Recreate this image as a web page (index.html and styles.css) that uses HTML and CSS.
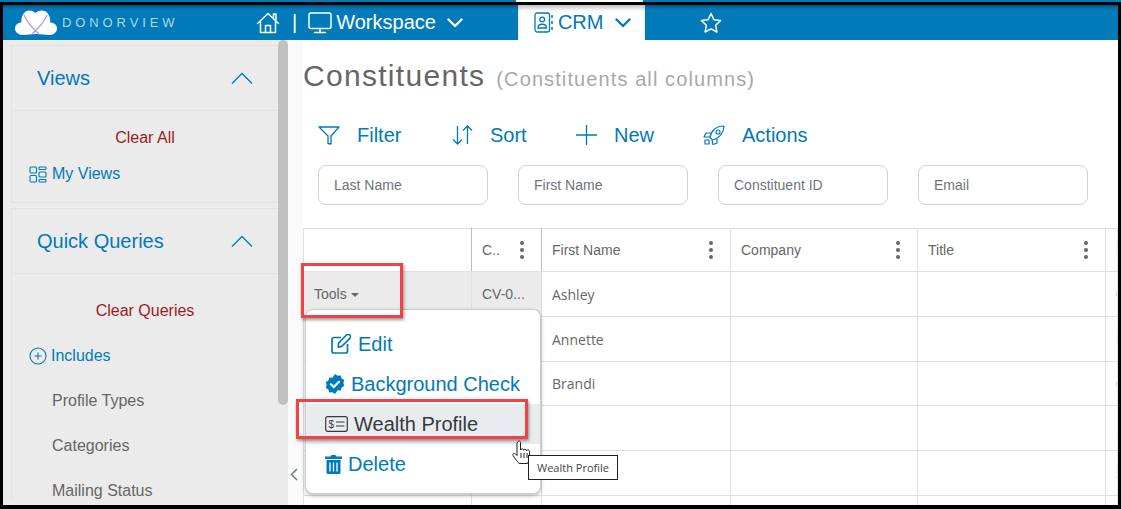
FILE: index.html
```html
<!DOCTYPE html>
<html lang="en">
<head>
	<meta charset="UTF-8">
	<title>Constituents</title>
	<link rel="stylesheet" href="styles.css">
</head>
<body>
<div class="page">
	<div class="top-strip"><div class="strip-tab"></div></div>
	<div class="frame">
		<header class="topbar">
			<div class="logo">
				<svg width="42" height="27" viewBox="0 0 42 27"><path fill="#fff" d="M8 26C3 26 0 23 0 19.500C0 16 3 13.500 6.500 13.500C6 11 6.500 8 8 5.500C10.500 1 16 0 20.500 4C25 0 31 1 33.500 5.500C35 8 35.500 11 35 13.500C39 13.500 42 16 42 19.500C42 23 39 26 35 26C30 26 26 25 21 25C16 25 13 26 8 26Z"/><path fill="none" stroke="#a99dc4" stroke-width="1.200" d="M9 6C12 13 17 19 24 25M32 6C29 13 24 19 17 25"/></svg>
				<span class="logo-text">DONORVIEW</span>
			</div>
			<nav class="topnav">
				<svg class="home-icon" width="24" height="24" viewBox="0 0 24 24" fill="none" stroke="#fff" stroke-width="1.500" stroke-linejoin="round" stroke-linecap="round"><path d="M1.500 12.500 12 2.500l10.500 10M4.500 10.500V21.500h15V10.500M9.500 21.500v-7h5v7M17.500 6V3h2.500v5.500"/></svg>
				<span class="nav-sep">|</span>
				<svg class="screen-icon" width="24" height="24" viewBox="0 0 24 24" fill="none" stroke="#fff" stroke-width="1.500" stroke-linecap="round"><rect x="1" y="2" width="22" height="15.500" rx="2"/><path d="M12 17.500v4M6.500 21.500h11"/></svg>
				<span class="nav-label">Workspace</span>
				<svg class="chev workspace-chev" width="16" height="10" viewBox="0 0 16 10" fill="none" stroke="#fff" stroke-width="2.400" stroke-linecap="round" stroke-linejoin="round"><path d="M1.500 1.500 8 8l6.500-6.500"/></svg>
				<div class="crm-tab">
					<svg width="19" height="21" viewBox="0 0 19 21" fill="none" stroke="#007ab8" stroke-width="1.300"><rect x="1" y="1" width="14.500" height="19" rx="2"/><circle cx="8.200" cy="7.500" r="2.400"/><path d="M4 16c0-5 8.500-5 8.500 0z"/><path stroke-width="1.500" d="M18 3v3M18 9v3M18 15v3"/></svg>
					<span class="crm-label">CRM</span>
					<svg class="chev" width="16" height="10" viewBox="0 0 16 10" fill="none" stroke="#007ab8" stroke-width="2.400" stroke-linecap="round" stroke-linejoin="round"><path d="M1.500 1.500 8 8l6.500-6.500"/></svg>
				</div>
				<svg class="star-icon" width="22" height="21" viewBox="0 0 22 21" fill="none" stroke="#fff" stroke-width="1.500" stroke-linejoin="round"><path d="M11 1.500l2.900 6.300 6.600.8-4.900 4.600 1.300 6.800L11 16.800 5.100 20l1.300-6.800L1.500 8.600l6.600-.8z"/></svg>
			</nav>
		</header>

		<div class="content">
			<aside class="sidebar">
				<section class="panel views-panel">
					<div class="panel-head">
						<span>Views</span>
						<svg width="22" height="12" viewBox="0 0 22 12" fill="none" stroke="#007ab8" stroke-width="1.300"><path d="M1 11.500 11 1.500l10 10"/></svg>
					</div>
					<div class="clear-link clear-all">Clear All</div>
					<div class="my-views">
						<svg width="18" height="17" viewBox="0 0 18 17" fill="none" stroke="#007ab8" stroke-width="1.100"><rect x="1" y="1" width="6.500" height="6" rx="1"/><rect x="10" y="1" width="7" height="2.500" rx=".8"/><rect x="10" y="6" width="7" height="5" rx="1"/><rect x="1" y="9.500" width="6.500" height="6.500" rx="1"/><rect x="10" y="13.500" width="7" height="2.500" rx=".8"/></svg>
						<span>My Views</span>
					</div>
				</section>
				<section class="panel">
					<div class="panel-head">
						<span>Quick Queries</span>
						<svg width="22" height="12" viewBox="0 0 22 12" fill="none" stroke="#007ab8" stroke-width="1.300"><path d="M1 11.500 11 1.500l10 10"/></svg>
					</div>
					<div class="clear-link clear-queries">Clear Queries</div>
					<div class="includes">
						<svg width="18" height="18" viewBox="0 0 18 18" fill="none" stroke="#007ab8" stroke-width="1.100"><circle cx="9" cy="9" r="8"/><path d="M9 5.500v7M5.500 9h7"/></svg>
						<span>Includes</span>
					</div>
					<div class="query-item">Profile Types</div>
					<div class="query-item">Categories</div>
					<div class="query-item">Mailing Status</div>
				</section>
			</aside>
			<div class="scrollbar"><div class="scroll-thumb"></div></div>
			<div class="gutter">
				<svg width="8" height="13" viewBox="0 0 8 13" fill="none" stroke="#6b7c88" stroke-width="1.500"><path d="M7 1 1.500 6.500 7 12"/></svg>
			</div>

			<main class="main">
				<div class="title-row">
					<h1>Constituents</h1>
					<span class="subtitle">(Constituents all columns)</span>
				</div>
				<div class="actions">
					<div class="action action-filter">
						<svg width="22" height="19" viewBox="0 0 22 19" fill="none" stroke="#007ab8" stroke-width="1.300" stroke-linejoin="round"><path d="M1 1h20l-8 9v8l-3-.5V10z"/></svg>
						<span>Filter</span>
					</div>
					<div class="action action-sort">
						<svg width="21" height="20" viewBox="0 0 21 20" fill="none" stroke="#007ab8" stroke-width="1.300"><path d="M5.500 1v18M1 14.500 5.500 19 10 14.500M15.500 19V1M11 5.500 15.500 1 20 5.500"/></svg>
						<span>Sort</span>
					</div>
					<div class="action action-new">
						<svg width="21" height="20" viewBox="0 0 21 20" fill="none" stroke="#007ab8" stroke-width="1.300"><path d="M10.500 0v20M0 10h21"/></svg>
						<span>New</span>
					</div>
					<div class="action action-rocket">
						<svg width="22" height="20" viewBox="0 0 22 20" fill="none" stroke="#007ab8" stroke-width="1.200" stroke-linejoin="round"><path d="M7 12.500 9.500 15C15 14 20.500 9 21 1 13 1 8 6 7 12.500z"/><circle cx="15" cy="7" r="2"/><path d="M8 8H3L1 12h6M14 14v4l-4 1.500-1-4.500M2 15h4v4H2z"/></svg>
						<span>Actions</span>
					</div>
				</div>
				<div class="filters">
					<input class="filter-input" placeholder="Last Name">
					<input class="filter-input" placeholder="First Name">
					<input class="filter-input" placeholder="Constituent ID">
					<input class="filter-input" placeholder="Email">
				</div>
				<table class="grid">
					<colgroup>
						<col class="col-tools"><col class="col-id"><col class="col-first"><col class="col-company"><col class="col-title"><col>
					</colgroup>
					<thead>
						<tr>
							<th class="dark-line"></th>
							<th class="dark-line"><div class="th-inner">C..<span class="dots"><i></i><i></i><i></i></span></div></th>
							<th><div class="th-inner">First Name<span class="dots"><i></i><i></i><i></i></span></div></th>
							<th><div class="th-inner">Company<span class="dots"><i></i><i></i><i></i></span></div></th>
							<th><div class="th-inner">Title<span class="dots"><i></i><i></i><i></i></span></div></th>
							<th class="clip-orange">L</th>
						</tr>
					</thead>
					<tbody>
						<tr class="row-a"><td class="shaded tools-cell">Tools<span class="caret"></span></td><td class="shaded">CV-0...</td><td class="name">Ashley</td><td></td><td></td><td class="clip-blue">C</td></tr>
						<tr class="row-b"><td></td><td></td><td class="name">Annette</td><td></td><td></td><td class="clip-orange">I</td></tr>
						<tr class="row-c"><td></td><td></td><td class="name">Brandi</td><td></td><td></td><td class="clip-blue">C</td></tr>
						<tr class="row-d"><td></td><td></td><td></td><td></td><td></td><td class="clip-blue">1</td></tr>
						<tr class="row-e"><td></td><td></td><td></td><td></td><td></td><td class="clip-blue">2</td></tr>
						<tr class="row-f"><td></td><td></td><td></td><td></td><td></td><td></td></tr>
					</tbody>
				</table>
			</main>
		</div>
	</div>

	<!-- things lying over the page -->
	<div class="tools-menu">
		<div class="menu-item menu-edit">
			<svg width="20" height="20" viewBox="0 0 20 20" fill="none" stroke="#007ab8" stroke-width="1.700" stroke-linejoin="round"><path d="M10 3.500H3a2 2 0 0 0-2 2V17a2 2 0 0 0 2 2h11.500a2 2 0 0 0 2-2v-7"/><path d="M7.500 9 15.500 1a1.800 1.800 0 0 1 3.300 3.300l-8 8-3.500.8z"/></svg>
			<span>Edit</span>
		</div>
		<div class="menu-item menu-check">
			<svg width="20" height="20" viewBox="0 0 20 20"><path fill="#007ab8" d="M10 0l2.600 1.700 3-.2 1 2.900 2.600 1.600-.8 3 .8 3-2.600 1.600-1 2.900-3-.2L10 20l-2.600-1.700-3 .2-1-2.900L.8 14l.8-3-.8-3 2.600-1.600 1-2.900 3 .2z"/><path fill="none" stroke="#fff" stroke-width="2.200" stroke-linecap="round" stroke-linejoin="round" d="M6 10.300l2.800 2.700L14 7.800"/></svg>
			<span>Background Check</span>
		</div>
		<div class="menu-item menu-wealth">
			<svg width="23" height="16" viewBox="0 0 23 16" fill="none" stroke="#343a40" stroke-width="1.200"><rect x=".7" y=".7" width="21.600" height="14.600" rx="2"/><text x="3.500" y="12" font-size="10" fill="#343a40" stroke="none" font-family="Liberation Sans">$</text><path d="M11 6h8.500M11 10h8.500"/></svg>
			<span>Wealth Profile</span>
		</div>
		<div class="menu-item menu-delete">
			<svg width="17" height="20" viewBox="0 0 17 20"><path fill="#007ab8" d="M0 2.500h5.500L6.500 1h4l1 1.500H17V5H0zM1.500 6h14v12.500a1.500 1.500 0 0 1-1.500 1.500H3a1.500 1.500 0 0 1-1.500-1.500z"/><path stroke="#fff" stroke-width="1.300" d="M5 8.500v9M8.500 8.500v9M12 8.500v9"/></svg>
			<span>Delete</span>
		</div>
	</div>
	<div class="red-box box-tools"></div>
	<div class="red-box box-wealth"></div>
	<svg class="hand-cursor" width="20" height="26" viewBox="0 0 20 26"><path fill="#fff" stroke="#222" stroke-width="1" stroke-linejoin="round" d="M6 1.500c1-1 2.500-.5 2.500 1V10c.5-1.500 3-1.500 3 0 .5-1 3-1 3 .5.500-1 3-.8 3 1V17c0 3-1 4-2 6.500H7C5.500 21 3 19 1 15.500c-.7-1.500 1-3 2.500-1.500L5 15.500V3z"/><path stroke="#222" d="M9 13v5M12 13v5M15 13v5"/></svg>
	<div class="tip">Wealth Profile</div>
</div>
</body>
</html>
```

FILE: styles.css
```css
* {
	box-sizing: border-box;
}
body {
	margin: 0;
	font-family: "Liberation Sans", Arial, sans-serif;
	background-color: #fff;
	overflow: hidden;
}
.page {
	position: relative;
	width: 1121px;
	height: 509px;
	overflow: hidden;
}
.top-strip {
	height: 2px;
	background-color: #007ab8;
	padding-left: 516px;
}
.strip-tab {
	width: 127px;
	height: 2px;
	background-color: #fff;
}
.frame {
	height: 507px;
	border: 3px solid #000;
	border-bottom-width: 4px;
	overflow: hidden;
	display: flex;
	flex-direction: column;
}

/* top bar */
.topbar {
	height: 35px;
	flex: none;
	display: flex;
	background-color: #007ab8;
	box-shadow: inset 0 3px 3px -1px rgba(0, 0, 0, .3);
}
.logo {
	width: 253px;
	display: flex;
	align-items: center;
	padding-left: 12px;
	gap: 5px;
}
.logo-text {
	font-size: 13px;
	letter-spacing: 3.9px;
	color: #b5d6e8;
}
.topnav {
	display: flex;
	align-items: center;
	flex: 1;
}
.nav-sep {
	color: #fff;
	font-size: 20px;
	margin: 0 11px 0 12px;
}
.nav-label {
	color: #fff;
	font-size: 20px;
	margin-left: 4px;
}
.workspace-chev {
	margin-left: 11px;
}
.crm-tab {
	width: 127px;
	height: 35px;
	margin-left: 55px;
	padding-left: 16px;
	display: flex;
	align-items: center;
	background-color: #fff;
	box-shadow: inset 0 4px 4px -1px rgba(0, 0, 0, .25);
}
.crm-label {
	color: #007ab8;
	font-size: 20px;
	margin: 0 12px 0 5px;
}
.star-icon {
	margin-left: 55px;
}

.content {
	flex: 1;
	min-height: 0;
	display: flex;
}

/* left side */
.sidebar {
	width: 275px;
	flex: none;
	padding: 5px 0 0 8px;
	background-color: #ebebeb;
	overflow: hidden;
}
.panel {
	border-top: 1px solid #e3e3e6;
	border-left: 1px solid #e3e3e6;
}
.views-panel {
	height: 158px;
	border-bottom: 1px solid #dfe2e8;
	margin-bottom: 5px;
}
.panel-head {
	height: 65px;
	padding: 0 25px 0 25px;
	display: flex;
	justify-content: space-between;
	align-items: center;
	font-size: 20px;
	color: #007ab8;
	border-bottom: 1px solid #dfe2e8;
}
.clear-link {
	text-align: center;
	font-size: 16px;
	color: #9c1b1f;
}
.clear-all {
	padding-top: 18px;
}
.clear-queries {
	padding-top: 28px;
}
.my-views {
	display: flex;
	align-items: center;
	gap: 5px;
	margin: 18px 0 0 17px;
	font-size: 16px;
	color: #007ab8;
}
.includes {
	display: flex;
	align-items: center;
	gap: 4px;
	margin: 27px 0 0 17px;
	font-size: 16px;
	color: #007ab8;
}
.query-item {
	margin: 27px 0 0 40px;
	font-size: 16px;
	line-height: 18px;
	color: #666;
}
.scrollbar {
	width: 10px;
	flex: none;
	background-color: #ebebeb;
}
.scroll-thumb {
	width: 10px;
	height: 365px;
	background-color: #c1c1c1;
	border-radius: 5px;
}
.gutter {
	width: 15px;
	flex: none;
	background-color: #fafafa;
	padding: 427px 0 0 2px;
}

/* main part */
.main {
	flex: 1;
	min-width: 0;
	background-color: #fff;
}
.title-row {
	display: flex;
	align-items: baseline;
	height: 70px;
	padding-top: 19px;
	gap: 11px;
}
h1 {
	margin: 0;
	font-size: 30px;
	font-weight: 400;
	letter-spacing: 1.300px;
	color: #666;
}
.subtitle {
	font-size: 20px;
	letter-spacing: 1.100px;
	color: #a8a8a8;
}
.actions {
	display: flex;
	align-items: center;
	height: 50px;
	margin-top: 0;
	padding-left: 15px;
	font-size: 20px;
	color: #007ab8;
}
.action {
	display: flex;
	align-items: center;
}
.action-filter {
	gap: 17px;
	width: 134px;
}
.action-sort {
	gap: 17px;
	width: 124px;
}
.action-new {
	gap: 17px;
	width: 127px;
}
.action-rocket {
	gap: 17px;
}
.filters {
	display: flex;
	gap: 30px;
	padding: 5px 0 0 15px;
}
.filter-input {
	width: 170px;
	height: 40px;
	padding: 0 15px;
	font-family: "Liberation Sans", Arial, sans-serif;
	font-size: 14px;
	border: 1px solid #ced4da;
	border-radius: 8px;
	background-color: #fff;
}
.filter-input::placeholder {
	color: #6c757d;
	opacity: 1;
}
.grid {
	width: 815px;
	margin-top: 23px;
	table-layout: fixed;
	border-collapse: collapse;
	font-size: 14px;
	color: #666;
}
.col-tools { width: 168px; }
.col-id { width: 70px; }
.col-first { width: 189px; }
.col-company { width: 187px; }
.col-title { width: 188px; }
.grid th, .grid td {
	border: 1px solid #dfe0e6;
	padding: 0 10px;
	font-weight: 400;
	text-align: left;
	overflow: hidden;
	white-space: nowrap;
}
.grid th {
	height: 43px;
}
.grid th.dark-line {
	border-right-color: #bbb;
}
.th-inner {
	display: flex;
	justify-content: space-between;
	align-items: center;
	padding-right: 16px;
}
.dark-line .th-inner {
	padding-right: 16px;
	padding-right: 16px;
}
.dots {
	width: 4px;
	display: flex;
	flex-direction: column;
	gap: 3px;
	margin-right: -9px;
}
.dots i {
	width: 4px;
	height: 4px;
	border-radius: 50%;
	background-color: #666;
}
.grid .row-a td { height: 45px; }
.grid .row-b td { height: 45px; }
.grid .row-c td { height: 44px; }
.grid .row-d td { height: 45px; }
.grid .row-e td { height: 45px; }
.grid .row-f td { height: 45px; }
.shaded {
	background-color: #ebebeb;
}
.name {
	font-family: "Open Sans", sans-serif;
}
.caret {
	display: inline-block;
	margin-left: 4px;
	vertical-align: 2px;
	border-top: 4px solid #666;
	border-left: 4px solid transparent;
	border-right: 4px solid transparent;
}
.clip-orange {
	color: #c8772e;
	font-weight: 700;
}
.clip-blue {
	color: #10567f;
	font-weight: 700;
}

/* dropdown */
.tools-menu {
	position: absolute;
	left: 305px;
	top: 309px;
	width: 236px;
	height: 185px;
	padding-top: 14px;
	background-color: #fff;
	border: 1px solid #ccc;
	border-radius: 8px;
	box-shadow: 0 2px 4px rgba(0, 0, 0, .25);
	font-size: 20px;
	color: #007ab8;
}
.menu-item {
	height: 40px;
	display: flex;
	align-items: center;
	padding-left: 19px;
	gap: 6px;
}
.menu-edit {
	padding-left: 25px;
	gap: 7px;
}
.menu-wealth {
	color: #343a40;
	background-color: #e9ecef;
}
.red-box {
	position: absolute;
	border: 3px solid #f44146;
	box-shadow: 1px 2px 3px rgba(0, 0, 0, .4);
}
.box-tools {
	left: 301px;
	top: 263px;
	width: 102px;
	height: 55px;
}
.box-wealth {
	left: 296px;
	top: 399px;
	width: 232px;
	height: 40px;
}
.hand-cursor {
	position: absolute;
	left: 512px;
	top: 440px;
}
.tip {
	position: absolute;
	left: 528px;
	top: 455px;
	width: 90px;
	height: 25px;
	border: 1px solid #222;
	background-color: #fff;
	font-family: "Open Sans", sans-serif;
	font-size: 11px;
	line-height: 23px;
	text-align: center;
	color: #444;
}
```
